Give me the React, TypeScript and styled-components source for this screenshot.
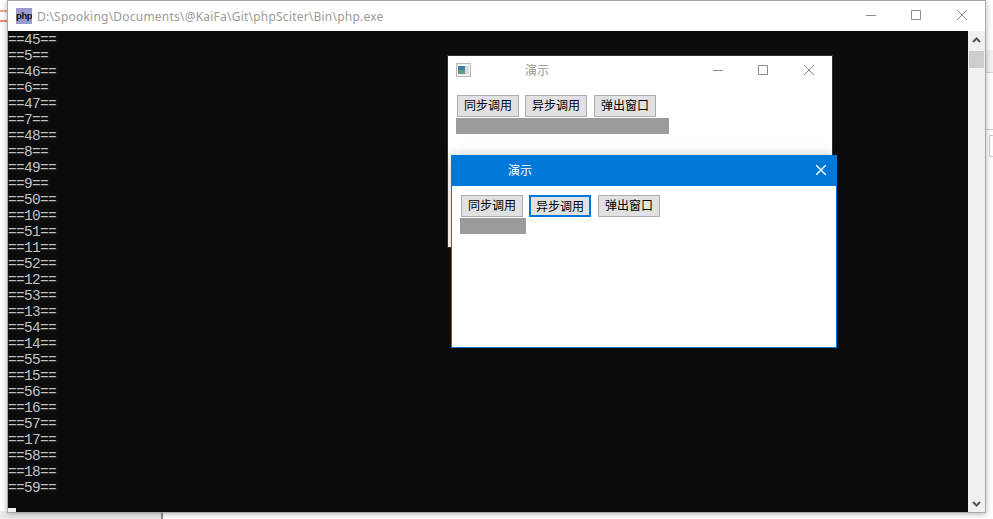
import React from "react";
import styled, { createGlobalStyle } from "styled-components";

const Global = createGlobalStyle`
  html, body { margin: 0; padding: 0; background: #fff; overflow: hidden; }
  #root { width: 993px; height: 519px; }
`;

const Desktop = styled.div`
  position: relative;
  width: 993px;
  height: 519px;
  overflow: hidden;
  background: #fff;
  font-family: "Noto Sans CJK SC", "Liberation Sans", sans-serif;
`;

const BackdropMarks = styled.div`
  position: absolute;
  left: 0;
  top: 10px;
  width: 8px;
  height: 8px;
  border-top: 2px solid #f2a890;
  border-bottom: 2px solid #ee8a72;
`;

const BackdropRule = styled.div`
  position: absolute;
  left: 161px;
  top: 511px;
  width: 2px;
  height: 8px;
  background: #8f8f8f;
`;

const BackdropFloor = styled.div`
  position: absolute;
  left: 0;
  top: 511px;
  width: 161px;
  height: 8px;
  background: #ececec;
`;

const BackdropBand = styled.div`
  position: absolute;
  left: 986px;
  top: 50px;
  width: 7px;
  height: 22px;
  background: #f3f3f3;
  border-bottom: 1px solid #d8d8d8;
`;

const BackdropLine = styled.div`
  position: absolute;
  left: 986px;
  top: 129px;
  width: 7px;
  height: 1px;
  background: #d0d0d0;
`;

const BackdropBox = styled.div`
  position: absolute;
  left: 989px;
  top: 135px;
  width: 4px;
  height: 22px;
  box-sizing: border-box;
  border: 1px solid #d0d0d0;
  border-right: 0;
`;

const ConsoleWindow = styled.div`
  position: absolute;
  left: 7px;
  top: 0;
  width: 979px;
  height: 513px;
  box-sizing: border-box;
  border: 1px solid #a8a8a8;
  display: flex;
  flex-direction: column;
  background: #fff;
  box-shadow: 0 1px 6px rgba(0, 0, 0, 0.3);
`;

const ConsoleTitleBar = styled.div`
  height: 30px;
  flex: none;
  display: flex;
  align-items: center;
  padding-left: 8px;
  gap: 5px;
`;

const ConsoleTitle = styled.span`
  font-family: "Noto Sans", "Liberation Sans", sans-serif;
  font-size: 12px;
  color: #9a9a9a;
  flex: 1;
  letter-spacing: 0.22px;
`;

const PhpIcon = styled.span`
  width: 16px;
  height: 16px;
  background: #9a9ace;
  color: #111;
  font-family: "Liberation Sans", sans-serif;
  font-size: 9.5px;
  font-weight: 700;
  line-height: 15px;
  text-align: center;
  letter-spacing: -0.4px;
  overflow: hidden;
`;

const Caption = styled.div<{ $c?: string }>`
  display: flex;
  align-items: center;
  margin-bottom: 2px;
  color: ${(p) => p.$c || "#8c8c8c"};
`;

const CaptionButton = styled.span<{ $w: number }>`
  width: ${(p) => p.$w}px;
  height: 28px;
  display: flex;
  align-items: center;
  justify-content: center;
`;

const ConsoleBody = styled.div`
  flex: 1;
  display: flex;
  min-height: 0;
`;

const Terminal = styled.div`
  position: relative;
  width: 960px;
  box-sizing: border-box;
  padding-top: 1px;
  background: #0c0c0c;
  color: #c0c0c0;
  font-family: "Liberation Mono", monospace;
  font-size: 14.5px;
  letter-spacing: -0.7px;
  line-height: 16px;
  white-space: pre;
  overflow: hidden;
`;

const Cursor = styled.span`
  position: absolute;
  left: 0;
  bottom: 0;
  width: 8px;
  height: 4px;
  background: #f2f2f2;
`;

const ScrollBar = styled.div`
  flex: 1;
  background: #f0f0f0;
  display: flex;
  flex-direction: column;
  align-items: center;
  justify-content: space-between;
  position: relative;
`;

const ScrollArrow = styled.span`
  height: 17px;
  display: flex;
  align-items: center;
  justify-content: center;
`;

const ScrollThumb = styled.div`
  position: absolute;
  top: 20px;
  left: 1px;
  width: 15px;
  height: 17px;
  background: #cdcdcd;
`;

const DemoWindow = styled.div<{ $x: number; $y: number; $active?: boolean }>`
  position: absolute;
  left: ${(p) => p.$x}px;
  top: ${(p) => p.$y}px;
  width: 386px;
  height: 193px;
  box-sizing: border-box;
  background: #fff;
  border: 1px solid ${(p) => (p.$active ? "#0078d7" : "#2f2f2f")};
  display: flex;
  flex-direction: column;
  box-shadow: ${(p) => (p.$active ? "0 0 12px rgba(0,0,0,0.2)" : "none")};
`;

const DemoTitleBar = styled.div<{ $active?: boolean }>`
  height: 30px;
  flex: none;
  position: relative;
  display: flex;
  align-items: center;
  justify-content: flex-end;
  background: ${(p) => (p.$active ? "#0078d7" : "#fff")};
`;

const DemoTitle = styled.span<{ $active?: boolean; $x: number }>`
  position: absolute;
  left: ${(p) => p.$x}px;
  top: 5px;
  font-size: 12px;
  line-height: 18px;
  color: ${(p) => (p.$active ? "#fff" : "#999")};
`;

const AppGlyph = styled.svg`
  position: absolute;
  left: 8px;
  top: 7px;
`;

const DemoBody = styled.div`
  display: flex;
  flex-direction: column;
  padding: 9px 8px;
`;

const ButtonRow = styled.div`
  display: flex;
  gap: 6px;
  padding-left: 1px;
`;

const DemoButton = styled.button<{ $focus?: boolean; $last?: boolean }>`
  box-sizing: border-box;
  width: 62px;
  height: 22px;
  padding: 0 0 2px;
  margin-left: ${(p) => (p.$last ? "1px" : "0")};
  background: #e1e1e1;
  color: #000;
  font-family: "Noto Sans CJK SC", sans-serif;
  font-size: 12px;
  line-height: 18px;
  border: ${(p) => (p.$focus ? "2px solid #0078d7" : "1px solid #adadad")};
`;

const Progress = styled.div`
  height: 16px;
  margin-top: 1px;
  background: #9b9b9b;
`;

const lines = [
  45, 5, 46, 6, 47, 7, 48, 8, 49, 9, 50, 10, 51, 11, 52, 12, 53, 13, 54, 14, 55, 15, 56, 16, 57,
  17, 58, 18, 59,
];

const MinIcon = () => (
  <svg width="10" height="10" viewBox="0 0 10 10">
    <path d="M0 5.5H10" stroke="currentColor" />
  </svg>
);
const MaxIcon = () => (
  <svg width="10" height="10" viewBox="0 0 10 10">
    <path d="M.5.5h9v9h-9z" fill="none" stroke="currentColor" />
  </svg>
);
const CloseIcon = ({ weight = 1 }: { weight?: number }) => (
  <svg width="10" height="10" viewBox="0 0 10 10">
    <path d="M0 0l10 10M10 0L0 10" fill="none" stroke="currentColor" strokeWidth={weight} />
  </svg>
);
const Chevron = ({ down }: { down?: boolean }) => (
  <svg width="9" height="6" viewBox="0 0 9 6">
    <path
      d={down ? "M1 1l3.5 3.5L8 1" : "M1 5l3.5-3.5L8 5"}
      fill="none"
      stroke="#555"
      strokeWidth="2"
    />
  </svg>
);

const Buttons = ({ focus }: { focus?: boolean }) => (
  <ButtonRow>
    <DemoButton>同步调用</DemoButton>
    <DemoButton $focus={focus}>异步调用</DemoButton>
    <DemoButton $last>弹出窗口</DemoButton>
  </ButtonRow>
);

export default function App() {
  return (
    <Desktop>
      <Global />
      <BackdropMarks />
      <BackdropFloor />
      <BackdropRule />
      <BackdropBand />
      <BackdropLine />
      <BackdropBox />
      <ConsoleWindow>
        <ConsoleTitleBar>
          <PhpIcon>php</PhpIcon>
          <ConsoleTitle>D:\Spooking\Documents\@KaiFa\Git\phpSciter\Bin\php.exe</ConsoleTitle>
          <Caption>
            <CaptionButton $w={44}><MinIcon /></CaptionButton>
            <CaptionButton $w={46}><MaxIcon /></CaptionButton>
            <CaptionButton $w={46}><CloseIcon /></CaptionButton>
          </Caption>
        </ConsoleTitleBar>
        <ConsoleBody>
          <Terminal>
            {lines.map((n) => `==${n}==`).join("\n")}
            <Cursor />
          </Terminal>
          <ScrollBar>
            <ScrollArrow><Chevron /></ScrollArrow>
            <ScrollThumb />
            <ScrollArrow><Chevron down /></ScrollArrow>
          </ScrollBar>
        </ConsoleBody>
      </ConsoleWindow>

      <DemoWindow $x={447} $y={55}>
        <DemoTitleBar>
          <AppGlyph width="15" height="14" viewBox="0 0 15 14">
            <rect x=".5" y=".5" width="14" height="13" fill="#f4f4f4" stroke="#b8b8b8" />
            <rect x="2" y="3" width="7" height="4" fill="#3f7f9f" />
            <rect x="2" y="7" width="7" height="4" fill="#5fa07f" />
            <rect x="9" y="3" width="4" height="8" fill="#d4dcdc" />
          </AppGlyph>
          <DemoTitle $x={77}>演示</DemoTitle>
          <Caption>
            <CaptionButton $w={45}><MinIcon /></CaptionButton>
            <CaptionButton $w={45}><MaxIcon /></CaptionButton>
            <CaptionButton $w={47}><CloseIcon /></CaptionButton>
          </Caption>
        </DemoTitleBar>
        <DemoBody>
          <Buttons />
          <Progress style={{ width: 213 }} />
        </DemoBody>
      </DemoWindow>

      <DemoWindow $x={451} $y={155} $active>
        <DemoTitleBar $active>
          <DemoTitle $x={56} $active>演示</DemoTitle>
          <Caption $c="#fff">
            <CaptionButton $w={30}><CloseIcon weight={1.4} /></CaptionButton>
          </Caption>
        </DemoTitleBar>
        <DemoBody>
          <Buttons focus />
          <Progress style={{ width: 66 }} />
        </DemoBody>
      </DemoWindow>
    </Desktop>
  );
}
